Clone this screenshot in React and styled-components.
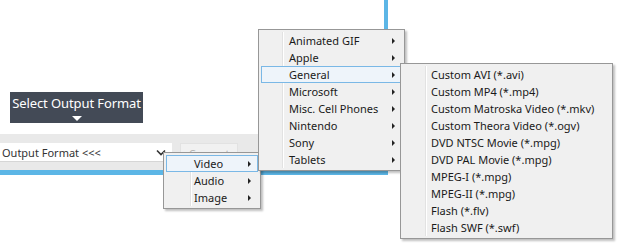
import React from "react";
import styled, { createGlobalStyle } from "styled-components";

const GlobalStyle = createGlobalStyle`
  html, body {
    margin: 0;
    padding: 0;
    background: #ffffff;
  }
  body {
    font-family: "Noto Sans", "Open Sans", sans-serif;
  }
`;

// Dados dos menus
const mediaTypes = ["Video", "Audio", "Image"];
const categories = [
  "Animated GIF",
  "Apple",
  "General",
  "Microsoft",
  "Misc. Cell Phones",
  "Nintendo",
  "Sony",
  "Tablets",
];
const formats = [
  "Custom AVI (*.avi)",
  "Custom MP4 (*.mp4)",
  "Custom Matroska Video (*.mkv)",
  "Custom Theora Video (*.ogv)",
  "DVD NTSC Movie (*.mpg)",
  "DVD PAL Movie (*.mpg)",
  "MPEG-I (*.mpg)",
  "MPEG-II (*.mpg)",
  "Flash (*.flv)",
  "Flash SWF (*.swf)",
];

const Stage = styled.div`
  position: relative;
  width: 620px;
  height: 244px;
  overflow: hidden;
  background: #ffffff;
`;

const Panel = styled.div`
  width: 384px;
  height: 175px;
  border-right: 4px solid #5cb6e6;
  display: flex;
  flex-direction: column;
`;

const Top = styled.div`
  height: 134px;
  padding: 92px 0 0 10px;
  box-sizing: border-box;
`;

const Tip = styled.div`
  width: 133px;
  height: 31px;
  background: #434a56;
  color: #ffffff;
  font-size: 13px;
  display: flex;
  flex-direction: column;
  align-items: center;
  padding-top: 3px;
  box-sizing: border-box;
  line-height: 17px;
  white-space: nowrap;
  letter-spacing: -0.1px;
`;

const TipArrow = styled.div`
  width: 0;
  height: 0;
  margin-top: 4px;
  border-left: 5px solid transparent;
  border-right: 5px solid transparent;
  border-top: 5px solid #ffffff;
`;

const Toolbar = styled.div`
  height: 36px;
  background: #e9e9e9;
  display: flex;
  align-items: flex-start;
  gap: 8px;
  padding-top: 9px;
  box-sizing: border-box;
`;

const Select = styled.div`
  width: 172px;
  height: 19px;
  background: #ffffff;
  border-bottom: 1px solid #d6d6d6;
  display: flex;
  align-items: center;
  justify-content: space-between;
  padding: 0 6px 0 2px;
  box-sizing: border-box;
  font-size: 11px;
  color: #333333;
  white-space: nowrap;
`;

const ConvertButton = styled.div`
  width: 58px;
  height: 20px;
  background: #f1f1f1;
  border: 1px solid #e2e2e2;
  box-sizing: border-box;
  color: #b4b4b4;
  font-size: 11px;
  display: flex;
  align-items: center;
  justify-content: center;
`;

const BlueBar = styled.div`
  height: 5px;
  background: #5cb6e6;
`;

const Menu = styled.div`
  position: absolute;
  left: ${(p) => p.$x}px;
  top: ${(p) => p.$y}px;
  width: ${(p) => p.$w}px;
  padding: 2px;
  box-sizing: border-box;
  background: #f0f0f0;
  border: 1px solid #979797;
  box-shadow: 2px 2px 2px rgba(0, 0, 0, 0.25);
  z-index: ${(p) => p.$z};
  font-size: 11px;
  color: #1a1a1a;

  &::before {
    content: "";
    position: absolute;
    top: 2px;
    bottom: 2px;
    left: ${(p) => p.$sep}px;
    width: 1px;
    background: #e2e2e2;
    border-right: 1px solid #ffffff;
  }
`;

const Item = styled.div`
  position: relative;
  height: 17px;
  line-height: 15px;
  padding-left: ${(p) => p.$indent}px;
  border: 1px solid ${(p) => (p.$active ? "#7ab8e6" : "transparent")};
  background: ${(p) => (p.$active ? "#eef4fa" : "transparent")};
  box-sizing: border-box;
  display: flex;
  align-items: center;
  white-space: nowrap;
  z-index: 1;
`;

const Arrow = styled.span`
  position: absolute;
  right: 6px;
  top: 5px;
  width: 0;
  height: 0;
  border-top: 3px solid transparent;
  border-bottom: 3px solid transparent;
  border-left: 3px solid #222222;
`;

const Chevron = () => (
  <svg width="10" height="7" viewBox="0 0 10 7">
    <path d="M1 1.5 L5 5.5 L9 1.5" fill="none" stroke="#333" strokeWidth="1.6" />
  </svg>
);

const MenuList = ({ items, active, x, y, w, sep, indent, z, arrows }) => (
  <Menu $x={x} $y={y} $w={w} $sep={sep} $z={z}>
    {items.map((label) => (
      <Item key={label} $active={label === active} $indent={indent}>
        {label}
        {arrows && <Arrow />}
      </Item>
    ))}
  </Menu>
);

const App = () => {
  return (
    <Stage>
      <GlobalStyle />
      <Panel>
        <Top>
          <Tip>
            Select Output Format
            <TipArrow />
          </Tip>
        </Top>
        <Toolbar>
          <Select>
            Output Format &lt;&lt;&lt;
            <Chevron />
          </Select>
          <ConvertButton>Convert</ConvertButton>
        </Toolbar>
        <BlueBar />
      </Panel>

      <MenuList items={mediaTypes} active="Video" x={163} y={152} w={98} sep={26} indent={27} z={2} arrows />
      <MenuList items={categories} active="General" x={258} y={29} w={147} sep={23} indent={27} z={3} arrows />
      <MenuList items={formats} active={null} x={400} y={63} w={213} sep={24} indent={27} z={4} />
    </Stage>
  );
};

export default App;
